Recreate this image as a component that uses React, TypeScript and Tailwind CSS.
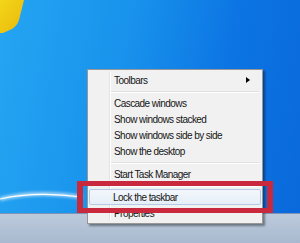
const items: (string | null)[] = [
  'Toolbars',
  null,
  'Cascade windows',
  'Show windows stacked',
  'Show windows side by side',
  'Show the desktop',
  null,
  'Start Task Manager',
  null,
  'Lock the taskbar',
  'Properties',
]

function Separator() {
  return (
    <div className="h-[7px] flex flex-col justify-center pl-[22px] pr-[2px]">
      <div className="h-px bg-[#e0e0e0]" />
      <div className="h-px bg-white" />
    </div>
  )
}

function MenuItem({ label }: { label: string }) {
  const active = label === 'Lock the taskbar'
  return (
    <div
      className={
        active
          ? 'h-[16px] flex items-center justify-between pl-[23px] pr-[9px] rounded-[2px] border border-[#b4cbe6] bg-[linear-gradient(to_bottom,#f3f7fc,#e6eef8)]'
          : 'h-[16px] flex items-center justify-between pl-[24px] pr-[10px] border border-transparent'
      }
    >
      <span>{label}</span>
      {label === 'Toolbars' && (
        <span className="w-0 h-0 border-y-[3px] border-y-transparent border-l-[4px] border-l-black" />
      )}
    </div>
  )
}

export default function App() {
  return (
    <div className="relative w-[300px] h-[243px] overflow-hidden flex flex-col font-['Liberation_Sans',Arial,sans-serif]">
      {/* desktop */}
      <div className="relative flex-1 bg-[linear-gradient(100deg,#25a5f2_0%,#1892ec_40%,#0c74e3_72%,#0a69db_100%)]">
        <svg className="absolute left-0 top-0" width="300" height="213" viewBox="0 0 300 213">
          <defs>
            <linearGradient id="yel" x1="0" y1="0" x2="1" y2="1">
              <stop offset="0" stopColor="#f4d61a" />
              <stop offset="1" stopColor="#e8b80c" />
            </linearGradient>
            <filter id="glow" x="-20%" y="-200%" width="140%" height="500%">
              <feGaussianBlur stdDeviation="1.6" />
            </filter>
          </defs>
          <path d="M0 0 L24 0 L19 20 Q17 26 12 29 L3 33 L0 33 Z" fill="url(#yel)" />
          <path d="M0 199 Q35 190 82 197" stroke="#ffffff" strokeOpacity="0.6" strokeWidth="4" fill="none" filter="url(#glow)" />
          <path d="M0 199 Q35 191 82 197" stroke="#ffffff" strokeWidth="1.2" fill="none" />
        </svg>
      </div>

      {/* taskbar */}
      <div className="h-[30px] border-t border-[#7c95b6] bg-[linear-gradient(to_bottom,#bccadb,#a8b9cf)]" />

      {/* context menu */}
      <div className="absolute left-[87px] top-[69px] w-[176px] py-[2px] px-[1px] border border-[#979797] bg-[#f1f1f1] shadow-[2px_2px_2px_rgba(0,0,0,0.4)] text-[10px] tracking-[-0.55px] text-[#151515]">
        <div className="bg-[linear-gradient(to_right,transparent_20px,#e2e2e2_20px,#e2e2e2_21px,#ffffff_21px,#ffffff_22px,transparent_22px)]">
          {items.map((it, i) => (it ? <MenuItem key={i} label={it} /> : <Separator key={i} />))}
        </div>
      </div>

      {/* annotation */}
      <div className="absolute left-[77px] top-[181px] w-[196px] h-[32px] border-y-[5px] border-x-[6px] border-[#c9293d]" />
    </div>
  )
}
